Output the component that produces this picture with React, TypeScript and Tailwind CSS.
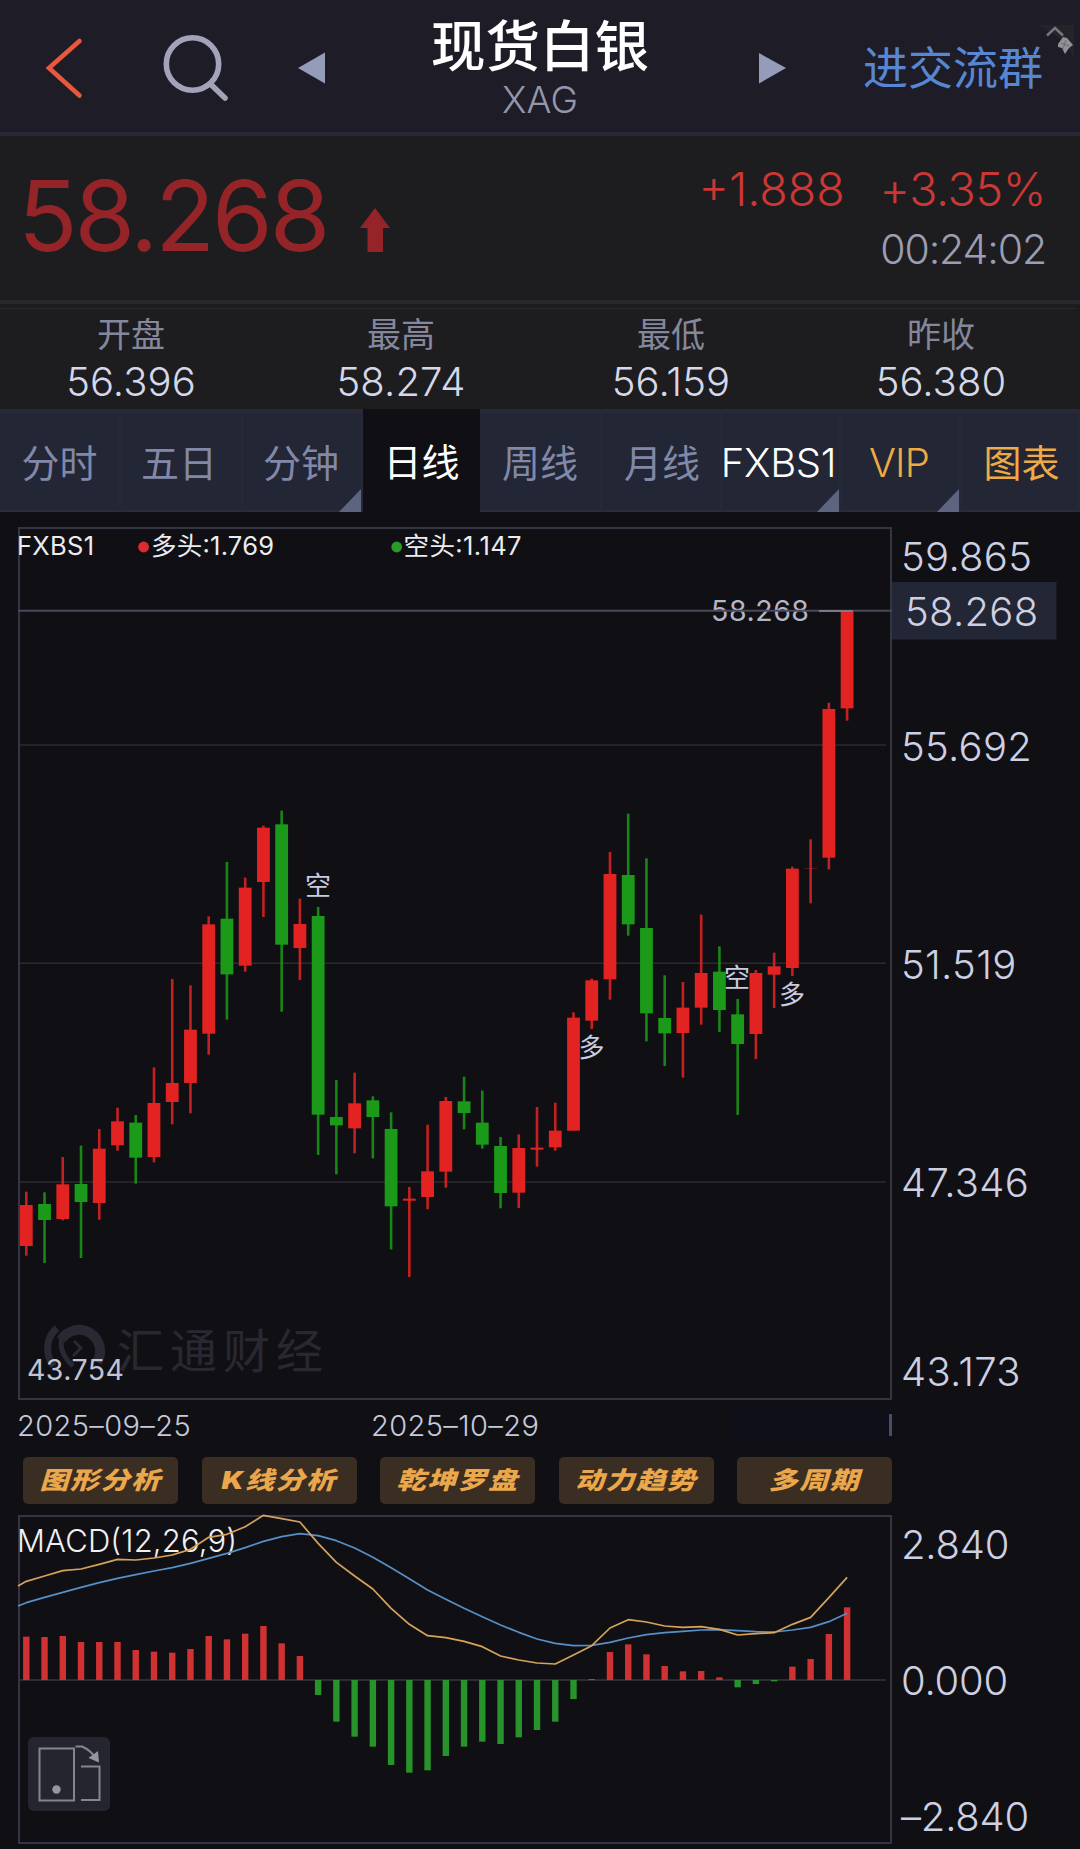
import React from 'react';
import { clsx } from 'clsx';

type Direction = 'up' | 'down';
// direction, high, body top, body bottom, low
type Candle = [Direction, number, number, number, number];

const UP = '#e32322';
const DOWN = '#1a9a18';
const FRAME = '#353442';
const GRID = '#2a2a31';
const AXIS_TEXT = '#cdcfe2';

const FIRST_X = 26.3;
const STEP = 18.24;
const barX = (index: number) => FIRST_X + index * STEP;
const candleY = (value: number) => 780 + value / 3;
const macdY = (value: number) => 1500 + value / 3;

const CANDLES: Candle[] = [
  ['up', 1235, 1275, 1398, 1427],
  ['down', 1237, 1272, 1320, 1449],
  ['up', 1131, 1213, 1317, 1321],
  ['down', 1097, 1212, 1266, 1434],
  ['up', 1047, 1106, 1269, 1319],
  ['up', 983, 1024, 1096, 1112],
  ['down', 1005, 1028, 1133, 1211],
  ['up', 862, 969, 1131, 1147],
  ['up', 597, 909, 966, 1033],
  ['up', 616, 749, 909, 1000],
  ['up', 409, 433, 761, 824],
  ['down', 246, 416, 583, 719],
  ['up', 293, 323, 557, 575],
  ['up', 137, 143, 306, 411],
  ['down', 92, 133, 494, 695],
  ['up', 356, 432, 504, 600],
  ['down', 381, 408, 1004, 1125],
  ['down', 900, 1011, 1036, 1183],
  ['up', 878, 970, 1045, 1120],
  ['down', 949, 961, 1011, 1135],
  ['down', 997, 1047, 1279, 1408],
  ['up', 1221, 1256, 1262, 1491],
  ['up', 1034, 1174, 1251, 1288],
  ['up', 951, 963, 1175, 1223],
  ['down', 890, 964, 999, 1048],
  ['down', 932, 1028, 1094, 1106],
  ['down', 1071, 1098, 1239, 1285],
  ['up', 1063, 1104, 1238, 1284],
  ['up', 981, 1103, 1109, 1160],
  ['up', 968, 1052, 1102, 1112],
  ['up', 697, 713, 1052, 1052],
  ['up', 596, 601, 722, 747],
  ['up', 216, 282, 598, 659],
  ['down', 101, 285, 433, 467],
  ['down', 235, 444, 700, 784],
  ['down', 586, 714, 760, 858],
  ['up', 606, 683, 759, 893],
  ['up', 404, 579, 683, 734],
  ['down', 499, 575, 690, 756],
  ['down', 657, 703, 792, 1005],
  ['up', 570, 579, 762, 837],
  ['up', 518, 559, 584, 684],
  ['up', 260, 266, 564, 588],
  ['up', 178, 264, 265, 370],
  ['up', -232, -213, 233, 268],
  ['up', -507, -507, -215, -178],
];

const ZERO = 540;
const HISTOGRAM = [
  410, 411, 408, 426, 426, 426, 450, 455, 458, 447, 408, 418, 401, 378, 430, 468,
  585, 665, 710, 740, 795, 818, 811, 768, 740, 725, 732, 712, 690, 665, 597,
  537, 456, 433, 463, 498, 514, 513, 532, 562, 552, 544, 500, 477, 402, 322,
];
const DIF = [
  244, 228, 212, 207, 193, 178, 180, 174, 165, 148, 112, 103, 80, 46, 56, 66,
  130, 187, 228, 267, 325, 373, 407, 413, 424, 440, 468, 480, 489, 492, 465,
  437, 384, 359, 366, 378, 382, 380, 388, 405, 401, 398, 373, 352, 293, 232,
];
const DEA = [
  308, 292, 277, 262, 248, 235, 224, 213, 203, 190, 175, 160, 143, 124, 110, 101,
  107, 122, 144, 172, 203, 236, 270, 298, 325, 350, 375, 397, 417, 430, 437,
  436, 427, 414, 404, 398, 394, 390, 389, 392, 395, 396, 390, 382, 365, 340,
];

const STATS = [
  { label: '开盘', value: '56.396' },
  { label: '最高', value: '58.274' },
  { label: '最低', value: '56.159' },
  { label: '昨收', value: '56.380' },
];

const TABS = [
  { label: '分时', className: 'w-[121px] text-[#8188a8]' },
  { label: '五日', className: 'w-[122px] pr-1 text-[#8188a8]' },
  { label: '分钟', className: 'w-[120px] pr-0.5 text-[#8188a8]', menu: true },
  { label: '日线', className: 'w-[117px] text-white', active: true },
  { label: '周线', className: 'w-[122px] text-[#8188a8]' },
  { label: '月线', className: 'w-[120px] pl-0.5 text-[#8188a8]' },
  { label: 'FXBS1', className: 'w-[119px] pr-1 text-[40px] tracking-[-0.3px] font-light text-white', menu: true },
  { label: 'VIP', className: 'w-[120px] pr-0.5 text-[40px] tracking-[-0.8px] font-light text-[#eeab45]', menu: true },
  { label: '图表', className: 'w-[119px] pl-1 text-[#eeab45]' },
];

const TOOLS = ['图形分析', 'K线分析', '乾坤罗盘', '动力趋势', '多周期'];

const PRICE_AXIS = [
  { label: '59.865', y: 557 },
  { label: '55.692', y: 746.5 },
  { label: '51.519', y: 964.5 },
  { label: '47.346', y: 1182.5 },
  { label: '43.173', y: 1372 },
];

const MACD_AXIS = [
  { label: '2.840', y: 1545 },
  { label: '0.000', y: 1680.5 },
  { label: '–2.840', y: 1816.5 },
];

const SIGNALS = [
  { label: '空', x: 318, y: 885 },
  { label: '多', x: 591.5, y: 1047.5 },
  { label: '空', x: 737, y: 977 },
  { label: '多', x: 792, y: 994 },
];

const linePoints = (start: number, values: number[]) =>
  [`18,${macdY(start)}`, ...values.map((v, i) => `${barX(i)},${macdY(v)}`)].join(' ');

const Header: React.FC = () => (
  <header className="flex h-[136px] shrink-0 border-b-4 border-[#282736] bg-[#1d1c27]">
    <div className="flex w-[400px] items-center pt-[4px]">
      <svg className="ml-[42px] h-[68px] w-[44px]" viewBox="42 34 44 68" fill="none">
        <path d="M79.5 41 L49 68 L79.5 95.5" stroke="#e8573e" strokeWidth="4.6" strokeLinecap="round" />
      </svg>
      <svg className="ml-[72px] h-[72px] w-[76px]" viewBox="158 32 76 72" fill="none" stroke="#a2a3b8">
        <circle cx="192.5" cy="64" r="26.2" strokeWidth="5.6" />
        <path d="M211.5 85 L225 98" strokeWidth="5.6" strokeLinecap="round" />
      </svg>
      <svg className="ml-[64px] h-[32px] w-[28px]" viewBox="298 52 28 32">
        <path d="M298 68 L325 52.5 V83.5 Z" fill="#949cba" />
      </svg>
    </div>
    <div className="flex w-[282px] flex-col items-center pr-[2px]">
      <h1 className="mt-[16px] text-[54.5px] leading-[60px] font-medium text-white">现货白银</h1>
      <p className="mt-[5px] text-[37px] leading-[38px] font-light text-[#9496ac]">XAG</p>
    </div>
    <div className="relative flex flex-1 items-center pt-[4px]">
      <svg className="ml-[76px] h-[32px] w-[28px]" viewBox="758 52 28 32">
        <path d="M759 53 V83.5 L786 68 Z" fill="#949cba" />
      </svg>
      <a className="ml-[77px] pt-0.5 text-[45px] leading-[60px] font-normal text-[#5787d2]">进交流群</a>
      <svg className="absolute top-[24px] right-[4px] h-[40px] w-[40px]" viewBox="1036 24 40 40" fill="none">
        <path d="M1037 25 H1074 V61 Q1070 40 1037 25 Z" fill="#24242b" />
        <path d="M1047 35.5 L1055 28 L1063 35.5" stroke="#77777b" strokeWidth="2.5" />
        <path d="M1058 44 L1063 37 L1067 38 L1073 45 L1069 48 L1065 54 L1062 48 L1058 47 Z" fill="#929296" />
        <path d="M1061 43 L1069 46 M1066 40 L1063 49" stroke="#6a6a70" strokeWidth="1" />
      </svg>
    </div>
  </header>
);

const Quote: React.FC = () => (
  <section className="flex h-[168px] shrink-0 justify-between border-b-4 border-[#28272d] bg-[#1d1d20] pr-[34px] pl-[18px]">
    <div className="flex">
      <span className="mt-[32px] w-[311px] text-[98px] leading-[96px] font-normal tracking-[-3px] whitespace-nowrap text-[#942427]">58.268</span>
      <svg className="mt-[72px] ml-[31px] h-[44px] w-[30px]" viewBox="0 0 30 44">
        <path d="M15 0 L30 20 H23 V44 H7.5 V20 H0 Z" fill="#942427" />
      </svg>
    </div>
    <div className="flex flex-col items-end">
      <div className="mt-[28px] flex gap-[35px] text-[46.5px] leading-[50px] font-light text-[#cb3734]">
        <span>+1.888</span>
        <span className="tracking-[-0.3px]">+3.35%</span>
      </div>
      <span className="mt-[12px] text-[41px] leading-[46px] font-light tracking-[-1.1px] text-[#9c9db2]">00:24:02</span>
    </div>
  </section>
);

const Stats: React.FC = () => (
  <section className="flex h-[105px] shrink-0 bg-[#1d1d20] pt-[4px]">
    <div className="-ml-1 grid w-full grid-cols-4 border-t border-[#29292f]">
      {STATS.map((stat) => (
        <div key={stat.label} className="flex flex-col items-center">
          <span className="mt-[6px] text-[34px] leading-[40px] font-normal text-[#85879c]">{stat.label}</span>
          <span className="mt-[5px] text-[40px] leading-[44px] font-light tracking-[0.1px] text-[#d6d8ea]">{stat.value}</span>
        </div>
      ))}
    </div>
  </section>
);

const Tabs: React.FC = () => (
  <nav className="flex h-[103px] shrink-0 bg-[#232634] text-[38px] font-normal">
    {TABS.map((tab) => (
      <button
        key={tab.label}
        type="button"
        className={clsx(
          'relative flex items-center justify-center pt-[3px] whitespace-nowrap',
          tab.active ? 'bg-[#101014]' : 'border-t-4 border-r-2 border-b-2 border-t-[#292937] border-r-[#272937] border-b-[#2d2d37]',
          tab.className,
        )}
      >
        {tab.label}
        {tab.menu && (
          <svg className="absolute right-0 -bottom-0.5 h-[23px] w-[22px]" viewBox="0 0 22 23">
            <path d="M22 0 V23 H0 Z" fill="#5d6480" />
          </svg>
        )}
      </button>
    ))}
  </nav>
);

const CandleShape: React.FC<{ candle: Candle; index: number }> = ({ candle, index }) => {
  const [direction, high, top, bottom, low] = candle;
  const color = direction === 'up' ? UP : DOWN;
  const x = barX(index);
  return (
    <g fill={color}>
      <rect x={x - 1.3} y={candleY(high)} width={2.6} height={(low - high) / 3} opacity={0.85} />
      <rect x={x - 6.4} y={candleY(top)} width={12.8} height={(bottom - top) / 3} />
    </g>
  );
};

const PriceChart: React.FC = () => (
  <section className="mt-[15px] flex h-[873px] shrink-0 pl-[18px]">
    <div className="relative h-full w-[874px] border-2 border-[#353442]">
      <svg className="absolute -top-0.5 -left-0.5 h-[873px] w-[874px]" viewBox="18 527 874 873">
        {[745, 963.3, 1182].map((y) => (
          <line key={y} x1={20} x2={886} y1={y} y2={y} stroke={GRID} strokeWidth={1.6} />
        ))}

        {/* Watermark */}
        <g fill="none" stroke="#292833">
          <path d="M57 1328 A27 27 0 0 0 54 1366" strokeWidth="7" />
          <path d="M61 1340 A21 21 0 1 1 97 1362" strokeWidth="10" />
          <path d="M62 1338 Q58 1352 73 1366" strokeWidth="5" />
          <path d="M74 1341 L81 1348 L73 1356" strokeWidth="3" />
        </g>
        <text x={117} y={1368} fontSize={47} letterSpacing={6} fill="#292830">汇通财经</text>

        {CANDLES.map((candle, index) => (
          <CandleShape key={index} candle={candle} index={index} />
        ))}

        <g fill="#c9cce0" fontSize={26} textAnchor="middle">
          {SIGNALS.map((signal) => (
            <text key={signal.x} x={signal.x} y={signal.y + 9.5}>{signal.label}</text>
          ))}
        </g>

        {/* Last price */}
        <text x={711} y={621.3} fontSize={28.5} textLength={98} fill="#b4b6c8">58.268</text>
        <line x1={18} x2={892} y1={610.7} y2={610.7} stroke="#4a4959" strokeWidth={2} />
        <line x1={819} x2={853} y1={611} y2={611} stroke="#8d8d9c" strokeWidth={1.6} />

        <text x={27} y={1380} fontSize={28.5} textLength={97} fill="#c0c3d4">43.754</text>

        {/* Legend */}
        <g fill="#ececf0" fontSize={25.5}>
          <text x={17} y={555} textLength={77}>FXBS1</text>
          <circle cx={143.6} cy={547} r={5.4} fill="#dd2c30" />
          <text x={151} y={555} textLength={123}>多头:1.769</text>
          <circle cx={396.7} cy={547} r={5.4} fill="#2a9a28" />
          <text x={403.5} y={555} textLength={118}>空头:1.147</text>
        </g>
      </svg>
    </div>
    <svg className="h-[873px] w-[188px]" viewBox="892 527 188 873">
      <rect x={892} y={582} width={164.5} height={57.5} fill="#232634" />
      <g fill={AXIS_TEXT} fontSize={40} fontWeight={300} letterSpacing={0.3}>
        <text x={905} y={626}>58.268</text>
        {PRICE_AXIS.map((tick) => (
          <text key={tick.label} x={901} y={tick.y + 14.3}>{tick.label}</text>
        ))}
      </g>
    </svg>
  </section>
);

const DateRow: React.FC = () => (
  <div className="flex h-[57px] shrink-0 pt-[8px] pl-[17px] text-[29px] leading-[36px] font-light text-[#c6c9da]">
    <span className="w-[354px] tracking-[0.4px]">2025–09–25</span>
    <span className="w-[360px] tracking-[0.4px]">2025–10–29</span>
    <span className="mt-[2px] flex h-[30px] w-[161px] justify-end bg-[#0d0e18] py-[4px]">
      <span className="w-[3px] bg-[#4a4c66]" />
    </span>
  </div>
);

const ToolRow: React.FC = () => (
  <div className="flex h-[47px] shrink-0 gap-[23.5px] pl-[23px]">
    {TOOLS.map((tool) => (
      <button
        key={tool}
        type="button"
        className="flex w-[155px] items-center justify-center rounded-[5px] bg-[#3a2e23] text-[29px] font-black tracking-[1.5px] whitespace-nowrap text-[#eaa74c] italic"
      >
        <span className="scale-y-[0.84]">{tool}</span>
      </button>
    ))}
  </div>
);

const MacdChart: React.FC = () => (
  <section className="mt-[11px] flex h-[329px] shrink-0 pl-[18px]">
    <div className="relative h-full w-[874px] border-2 border-[#353442]">
      <svg className="absolute -top-0.5 -left-0.5 h-[329px] w-[874px] overflow-visible" viewBox="18 1515 874 329" fill="none">
        <line x1={20} x2={886} y1={macdY(ZERO)} y2={macdY(ZERO)} stroke={FRAME} strokeWidth={1.6} />
        <text x={17} y={1552} fontSize={31} fontWeight={300} textLength={220} fill="#f0f0f3">MACD(12,26,9)</text>
        {HISTOGRAM.map((value, index) => (
          <rect
            key={index}
            x={barX(index) - 3.2}
            y={macdY(Math.min(value, ZERO))}
            width={6.4}
            height={Math.abs(value - ZERO) / 3}
            fill={value < ZERO ? '#d03234' : '#28922b'}
          />
        ))}
        <polyline points={linePoints(318, DEA)} stroke="#5590c8" strokeWidth={1.7} strokeLinejoin="round" />
        <polyline points={linePoints(258, DIF)} stroke="#d7a35c" strokeWidth={1.7} strokeLinejoin="round" />
      </svg>
      <button type="button" className="absolute top-[220px] left-[8px] rounded-md bg-[#25252f]">
        <svg className="h-[74px] w-[82px]" viewBox="28 1737 82 74" fill="none" stroke="#85858e" strokeWidth="2">
          <rect x="39.5" y="1748.5" width="34.5" height="52" />
          <circle cx="56.5" cy="1789.5" r="4.2" fill="#96969e" stroke="none" />
          <path d="M81 1766.5 H99.5 V1800 H81" />
          <path d="M75.5 1746.5 H82 Q90 1750 95 1757" />
          <path d="M88.5 1758 L98 1751 L99 1762.5 Z" fill="#96969e" stroke="none" />
        </svg>
      </button>
    </div>
    <svg className="h-[329px] w-[188px]" viewBox="892 1515 188 329">
      <g fill={AXIS_TEXT} fontSize={40} fontWeight={300} letterSpacing={-0.2}>
        {MACD_AXIS.map((tick) => (
          <text key={tick.label} x={901} y={tick.y + 14.3}>{tick.label}</text>
        ))}
      </g>
    </svg>
  </section>
);

export default function App() {
  return (
    <div className="flex h-[1849px] w-[1080px] flex-col overflow-hidden bg-[#101014] font-['Inter','Noto_Sans_CJK_SC',sans-serif]">
      <Header />
      <Quote />
      <Stats />
      <Tabs />
      <PriceChart />
      <DateRow />
      <ToolRow />
      <MacdChart />
    </div>
  );
}
